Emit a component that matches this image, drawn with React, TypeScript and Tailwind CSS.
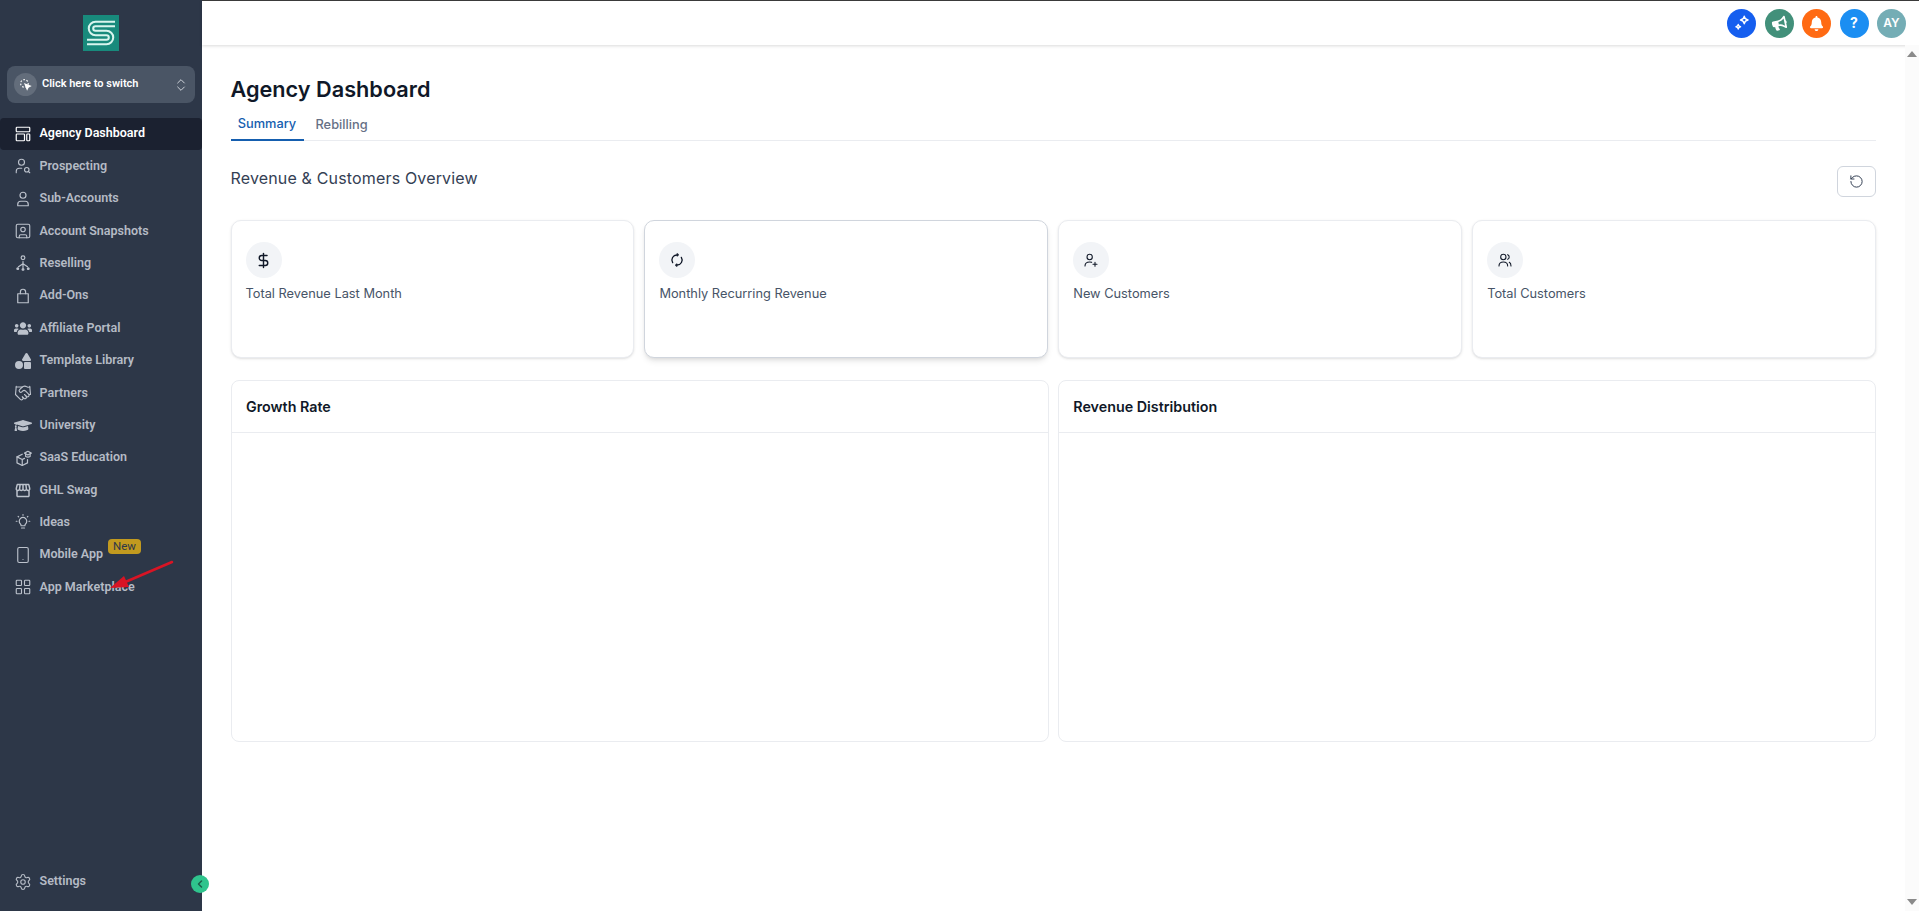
import type { ReactNode } from 'react';
import {
  ChevronLeft,
  ChevronsUpDown,
  DollarSign,
  Handshake,
  LayoutGrid,
  RotateCcw,
  Settings,
  Smartphone,
  SquareUser,
  UserSearch,
} from 'lucide-react';
import { FaBell, FaBullhorn, FaGraduationCap, FaShapes, FaUsers } from 'react-icons/fa';
import { MdStorefront } from 'react-icons/md';

const Line = ({ children, size = 18 }: { children: ReactNode; size?: number }) => (
  <svg width={size} height={size} viewBox="0 0 24 24" fill="none" stroke="currentColor" strokeWidth="1.6" strokeLinecap="round" strokeLinejoin="round">
    {children}
  </svg>
);

const navItems: { label: string; icon: ReactNode; active?: boolean; badge?: boolean }[] = [
  {
    label: 'Agency Dashboard',
    active: true,
    icon: (
      <Line>
        <rect x="3" y="3" width="18" height="6" rx="1" />
        <rect x="3" y="12" width="11" height="9" rx="1" />
        <rect x="17" y="12" width="4" height="9" rx="1" />
      </Line>
    ),
  },
  { label: 'Prospecting', icon: <UserSearch size={18} strokeWidth={1.5} /> },
  {
    label: 'Sub-Accounts',
    icon: (
      <Line>
        <circle cx="12" cy="7" r="4" />
        <path d="M5 21v-2a4 4 0 0 1 4-4h6a4 4 0 0 1 4 4v2z" />
      </Line>
    ),
  },
  { label: 'Account Snapshots', icon: <SquareUser size={18} strokeWidth={1.5} /> },
  {
    label: 'Reselling',
    icon: (
      <Line>
        <circle cx="12" cy="5" r="2.5" />
        <path d="M12 10v3M12 13l-6 4M12 13l6 4M12 13v5" />
        <circle cx="5" cy="19.500" r="1.200" fill="currentColor" />
        <circle cx="12" cy="20.500" r="1.200" fill="currentColor" />
        <circle cx="19" cy="19.500" r="1.200" fill="currentColor" />
      </Line>
    ),
  },
  {
    label: 'Add-Ons',
    icon: (
      <Line>
        <path d="M5 9h14v12H5z" />
        <path d="M8.5 9V6.5a3.5 3.5 0 0 1 7 0V9" />
      </Line>
    ),
  },
  { label: 'Affiliate Portal', icon: <FaUsers size={19} /> },
  { label: 'Template Library', icon: <FaShapes size={16} /> },
  { label: 'Partners', icon: <Handshake size={18} strokeWidth={1.5} /> },
  { label: 'University', icon: <FaGraduationCap size={19} /> },
  {
    label: 'SaaS Education',
    icon: (
      <Line>
        <path d="M11 7 4 10.5v8L11 22l7-3.5V14" />
        <path d="M4 10.5l7 3.5 3-1.5M11 14v8" />
        <path d="M14 5.5 18.5 3 23 5.5 18.5 8z" />
        <path d="M15.5 7v3c2 1 4 1 6 0V7" />
      </Line>
    ),
  },
  { label: 'GHL Swag', icon: <MdStorefront size={19} /> },
  {
    label: 'Ideas',
    icon: (
      <Line>
        <path d="M8.5 14.5a5 5 0 1 1 7 0c-.8.8-1 1.5-1 2.5h-5c0-1-.2-1.700-1-2.500z" />
        <path d="M10 20h4M12 2v1M3 11h1M20 11h1M5.500 4.500l.7.7M18.500 4.500l-.7.7" />
      </Line>
    ),
  },
  { label: 'Mobile App', icon: <Smartphone size={18} strokeWidth={1.5} />, badge: true },
  { label: 'App Marketplace', icon: <LayoutGrid size={18} strokeWidth={1.5} /> },
];

const stats: { label: string; icon: ReactNode; hover?: boolean }[] = [
  { label: 'Total Revenue Last Month', icon: <DollarSign size={17} strokeWidth={2} /> },
  {
    label: 'Monthly Recurring Revenue',
    hover: true,
    icon: (
      <Line size={16}>
        <path d="M5.500 16A7.500 7.500 0 0 1 12 4.500M18.500 8A7.500 7.500 0 0 1 12 19.500" strokeWidth="2" />
        <path d="M12 2.500v4l2.500-2zM12 21.500v-4l-2.500 2z" fill="currentColor" strokeWidth="1" />
      </Line>
    ),
  },
  {
    label: 'New Customers',
    icon: (
      <Line size={16}>
        <circle cx="10" cy="7.500" r="4" />
        <path d="M3 21c0-4 3-6 7-6 1 0 2 .1 3 .5M18 15.500v6M15 18.500h6" />
      </Line>
    ),
  },
  {
    label: 'Total Customers',
    icon: (
      <Line size={16}>
        <circle cx="9.500" cy="7.500" r="4" />
        <path d="M3 21c0-4 2.800-6 6.500-6s6.500 2 6.500 6M16 4c1.500.6 2.300 2 2.300 3.500S17.500 10.400 16 11M18.500 15.500c1.700.9 2.500 3 2.500 5.500" />
      </Line>
    ),
  },
];

const Panel = ({ title }: { title: string }) => (
  <div className="rounded-lg border border-[#eaecf0] bg-white">
    <div className="flex h-[52px] items-center border-b border-[#eaecf0] px-[14.500px] text-[14.300px] font-semibold text-[#101828]">{title}</div>
    <div className="h-[308px]" />
  </div>
);

export default function App() {
  return (
    <div className="relative flex h-[911px] w-full overflow-hidden bg-white font-['Inter',sans-serif]">
      {/* Sidebar */}
      <aside className="flex h-full w-[202px] shrink-0 flex-col bg-[#2d3748] font-['Roboto',sans-serif]">
        <div className="flex justify-center pt-[15px]">
          <svg width="36" height="36" viewBox="0 0 36 36">
            <rect width="36" height="36" fill="#188a7c" />
            <path d="M32 9H12.500a4.500 4.500 0 0 0 0 9h11a4.500 4.500 0 0 1 0 9H4" fill="none" stroke="#d8f5ee" strokeWidth="6.500" />
            <path d="M33 9H12.500a4.500 4.500 0 0 0 0 9h11a4.500 4.500 0 0 1 0 9H3" fill="none" stroke="#188a7c" strokeWidth="2.400" />
          </svg>
        </div>
        <button className="mx-[7px] mt-[15px] flex h-[37px] items-center rounded-lg bg-[#4a5565] pl-[7px] pr-[6px] text-white">
          <span className="flex h-[23px] w-[23px] items-center justify-center rounded-full bg-[#636d7b]">
            <svg width="13" height="13" viewBox="0 0 24 24" fill="none" stroke="currentColor" strokeWidth="2" strokeDasharray="3 3">
              <circle cx="10" cy="10" r="7" />
              <path d="M11 11l10 4-4 2-2 4z" fill="currentColor" strokeDasharray="none" />
            </svg>
          </span>
          <span className="ml-[5px] flex-1 text-left text-[11px] font-semibold">Click here to switch</span>
          <ChevronsUpDown size={16} strokeWidth={1.5} className="text-[#cfd4db]" />
        </button>
        <nav className="mt-[14.600px] flex flex-col">
          {navItems.map((item) => (
            <div
              key={item.label}
              className={`relative flex h-[32.4px] items-center rounded pl-[14px] text-[12.500px] font-semibold ${
                item.active ? 'bg-[#1b2130] text-white' : 'text-[#b5bbc5]'
              }`}
            >
              <span className={`flex w-[18px] justify-center ${item.active ? 'text-white' : 'text-[#bcc2cc]'}`}>{item.icon}</span>
              <span className="ml-[7.500px]">{item.label}</span>
              {item.badge && (
                <span className="absolute left-[108px] top-[0px] rounded-sm bg-[#c29a1f] px-[5px] text-[11.500px] font-normal leading-[15px] text-[#2d3748]">New</span>
              )}
            </div>
          ))}
        </nav>
        <div className="mt-auto mb-[20px] flex items-center pl-[14px] text-[12.500px] font-semibold text-[#b5bbc5]">
          <Settings size={18} strokeWidth={1.5} />
          <span className="ml-[7.500px]">Settings</span>
        </div>
      </aside>

      {/* Collapse handle */}
      <div className="absolute left-[191px] top-[875px] flex h-[18px] w-[18px] items-center justify-center rounded-full bg-[#2fc48d] text-[#1d5e4a]">
        <ChevronLeft size={12} strokeWidth={3} />
      </div>

      {/* Annotation arrow */}
      <svg className="absolute left-[105px] top-[555px]" width="72" height="40" viewBox="0 0 72 40">
        <path d="M67 7 18 28" stroke="#d81424" strokeWidth="2.500" strokeLinecap="round" />
        <path d="M5 33 19 21l5 11z" fill="#d81424" />
      </svg>

      <div className="flex min-w-0 flex-1 flex-col">
        {/* Top bar */}
        <header className="flex h-[45px] shrink-0 items-center justify-end gap-[8.500px] border-t border-[#3a3a3a] pr-[13px] shadow-[0_1px_3px_rgba(0,0,0,0.15)]">
          <span className="flex h-[29px] w-[29px] items-center justify-center rounded-full bg-[#155eef] text-white">
            <svg width="18" height="18" viewBox="0 0 24 24" fill="none" stroke="currentColor" strokeWidth="2" strokeLinejoin="round">
              <path d="M15 3c.5 3 2 4.500 5 5-3 .5-4.500 2-5 5-.5-3-2-4.500-5-5 3-.5 4.500-2 5-5z" />
              <path d="M7 14c.3 1.800 1.200 2.700 3 3-1.800.3-2.700 1.200-3 3-.3-1.800-1.200-2.700-3-3 1.800-.3 2.700-1.200 3-3z" />
            </svg>
          </span>
          <span className="flex h-[29px] w-[29px] items-center justify-center rounded-full bg-[#42907a] text-white">
            <FaBullhorn size={15} className="-rotate-12" />
          </span>
          <span className="flex h-[29px] w-[29px] items-center justify-center rounded-full bg-[#ff6a13] text-white">
            <FaBell size={15} />
          </span>
          <span className="flex h-[29px] w-[29px] items-center justify-center rounded-full bg-[#1b8ef2] text-sm font-bold text-white">?</span>
          <span className="flex h-[29px] w-[29px] items-center justify-center rounded-full bg-[#74adb5] text-xs font-semibold text-white">AY</span>
        </header>

        <div className="flex min-h-0 flex-1">
          <main className="min-w-0 flex-1 pl-[28.500px] pr-[29px]">
            <h1 className="mt-[29px] text-[21.700px] font-semibold leading-[30px] text-[#101828]">Agency Dashboard</h1>
            <div className="mt-[5px] flex h-[32px] border-b border-[#eaecf0] text-[12.800px] font-medium">
              <span className="flex h-[32px] w-[73px] items-center justify-center border-b-2 border-[#155eaf] text-[#155eaf]">Summary</span>
              <span className="ml-[6px] flex h-[31px] items-center px-[6px] text-[#667085]">Rebilling</span>
            </div>
            <div className="mt-[25px] flex items-start justify-between">
              <h2 className="text-[16px] font-normal leading-[24px] tracking-[0.01em] text-[#344054]">Revenue &amp; Customers Overview</h2>
              <button className="flex h-[31px] w-[39px] items-center justify-center rounded-md border border-[#d0d5dd] text-[#344054]">
                <RotateCcw size={15} strokeWidth={1.6} />
              </button>
            </div>
            <div className="mt-[23px] grid grid-cols-4 gap-[10px]">
              {stats.map((s) => (
                <div
                  key={s.label}
                  className={`h-[138px] rounded-[10px] border bg-white px-[14px] pt-[21px] ${
                    s.hover ? 'border-[#d0d5dd] shadow-md' : 'border-[#eaecf0] shadow-sm'
                  }`}
                >
                  <span className="flex h-[36px] w-[36px] items-center justify-center rounded-full bg-[#f2f4f7] text-[#101828]">{s.icon}</span>
                  <p className="mt-[6px] text-[12.800px] leading-[20px] text-[#475467]">{s.label}</p>
                </div>
              ))}
            </div>
            <div className="mt-[22px] grid grid-cols-2 gap-[9px]">
              <Panel title="Growth Rate" />
              <Panel title="Revenue Distribution" />
            </div>
          </main>

          {/* Scrollbar */}
          <div className="flex w-[14px] shrink-0 flex-col items-center justify-between bg-[#fbfbfb] py-[6px]">
            <span className="h-0 w-0 border-x-[5px] border-b-[6px] border-x-transparent border-b-[#8a8a8a]" />
            <span className="h-0 w-0 border-x-[5px] border-t-[6px] border-x-transparent border-t-[#8a8a8a]" />
          </div>
        </div>
      </div>
    </div>
  );
}
